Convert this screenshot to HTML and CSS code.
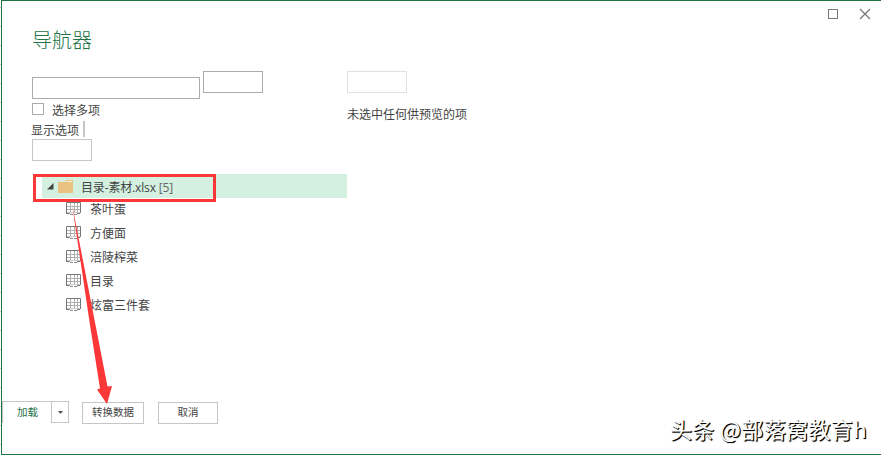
FILE: index.html
```html
<!DOCTYPE html>
<html lang="zh-CN">
<head>
  <meta charset="UTF-8" />
  <meta name="viewport" content="width=device-width, initial-scale=1.0" />
  <title>导航器</title>
  <link rel="stylesheet" href="styles.css">
</head>
<body>
  <svg class="defs" width="0" height="0">
    <symbol id="sheet" viewBox="0 0 15 13">
      <path d="M4.500 1v10M8.500 1v10M11.500 1v10M1 4.500h13M1 7.500h13" stroke="#b0b0b0" fill="none" />
      <path d="M1 10.500h13" stroke="#ccc" fill="none" />
      <path d="M.5 12V.5h14V11M0 11.500h4M11 11.500h3" stroke="#777" fill="none" />
      <path d="M4 12.500h3M8 12.500h3" stroke="#8a8a8a" fill="none" />
    </symbol>
  </svg>

  <div class="edge"></div>
  <div class="window">
    <header class="titlebar">
      <svg width="11" height="11"><rect x=".5" y=".5" width="9" height="9" fill="none" stroke="#777" /></svg>
      <svg width="12" height="12"><path d="M1 1l10 10M11 1L1 11" fill="none" stroke="#777" stroke-width="1.3" /></svg>
    </header>
    <h1>导航器</h1>

    <main class="content">
      <section class="left">
        <div class="search">
          <div class="box box-wide"></div>
          <div class="box"></div>
        </div>
        <label class="multi"><span class="check"></span>选择多项</label>
        <div class="options">显示选项<span class="bar"></span></div>
        <div class="box box-light"></div>

        <div class="tree">
          <div class="root">
            <svg class="toggle" width="7" height="7"><path d="M6.500 0v6.500H0z" fill="#444" /></svg>
            <svg class="folder" width="15" height="13"><path d="M0 2h7l1-2h7v13H0z" fill="#eac282" /><path d="M8.500 1.500h5.500" stroke="#fbf1de" /></svg>
            <span class="name">目录-素材.xlsx <span class="count">[5]</span></span>
            <div class="mark"></div>
          </div>
          <ul>
            <li><svg width="15" height="13"><use href="#sheet" /></svg>茶叶蛋</li>
            <li><svg width="15" height="13"><use href="#sheet" /></svg>方便面</li>
            <li><svg width="15" height="13"><use href="#sheet" /></svg>涪陵榨菜</li>
            <li><svg width="15" height="13"><use href="#sheet" /></svg>目录</li>
            <li><svg width="15" height="13"><use href="#sheet" /></svg>炫富三件套</li>
          </ul>
        </div>
      </section>

      <section class="preview">
        <div class="box box-faint"></div>
        <p>未选中任何供预览的项</p>
      </section>
    </main>

    <footer class="buttons">
      <div class="load">
        <span class="load-text">加载</span>
        <span class="drop"><svg width="5" height="3"><path d="M0 0h5L2.500 3z" fill="#555" /></svg></span>
      </div>
      <div class="btn btn-convert">转换数据</div>
      <div class="btn">取消</div>
    </footer>
  </div>

  <svg class="arrow" width="881" height="455">
    <path d="M72 204L95.500 325L107.500 386.500L112 386L107 404L97 389.500L100 388.500L90 325z" fill="#fb3737" />
  </svg>
  <div class="watermark">头条 @部落窝教育h</div>
</body>
</html>
```
FILE: styles.css
```css
* {
  box-sizing: border-box;
}
body {
  margin: 0;
  width: 881px;
  height: 455px;
  display: flex;
  position: relative;
  overflow: hidden;
  background: #fff;
  color: #444;
  font-family: "Noto Sans CJK SC", sans-serif;
  font-size: 12px;
  line-height: 16px;
}
svg {
  display: block;
  flex: none;
}
.defs {
  position: absolute;
}
.edge {
  width: 1px;
  background: repeating-linear-gradient(#fff 0 7px, #c8c8c8 7px 8px, #fff 8px 19px);
}
.window {
  flex: 1;
  display: flex;
  flex-direction: column;
  border: 1px solid #217346;
  border-right: none;
}
.titlebar {
  height: 24px;
  padding: 7px 10px 0 0;
  display: flex;
  justify-content: flex-end;
  gap: 20px;
}
.titlebar svg:first-child {
  margin-top: 1px;
}
h1 {
  margin: 0 0 0 30px;
  height: 46px;
  line-height: 29px;
  font-size: 20px;
  font-weight: 300;
  color: #217346;
}
.content {
  display: flex;
  height: 330px;
  padding-left: 30px;
}
.left {
  width: 315px;
}
.search {
  display: flex;
  gap: 3px;
  height: 32px;
}
.box {
  width: 60px;
  height: 22px;
  border: 1px solid #ababab;
}
.box-wide {
  width: 168px;
  margin-top: 6px;
}
.box-light {
  border-color: #c6c6c6;
}
.box-faint {
  border-color: #e1e1e1;
}
.multi {
  display: flex;
  height: 18px;
  line-height: 14px;
}
.check {
  width: 12px;
  height: 12px;
  margin-right: 8px;
  border: 1px solid #ababab;
}
.options {
  display: flex;
  height: 18px;
  margin-left: -1px;
  line-height: 18px;
}
.bar {
  width: 2px;
  height: 16px;
  margin-left: 4px;
  background: #c6c6c6;
}
.tree {
  padding: 13px 0 0 10px;
}
.root {
  position: relative;
  display: flex;
  align-items: center;
  height: 24px;
  padding-left: 5px;
  background: #d3f0e0;
}
.folder {
  margin: 0 8px 0 4px;
}
.name {
  padding-top: 3px;
  font-family: "Open Sans", "Noto Sans CJK SC", sans-serif;
  letter-spacing: -0.15px;
}
.count {
  color: #666;
}
/* red frame around the workbook row */
.mark {
  position: absolute;
  left: -9px;
  top: 0;
  width: 183px;
  height: 28px;
  border: 3px solid #fb3737;
}
ul {
  list-style: none;
  margin: -1px 0 0;
  padding: 0 0 0 24px;
}
li {
  display: flex;
  align-items: center;
  gap: 9px;
  height: 24px;
}
li svg {
  margin-bottom: 2px;
}
.preview p {
  margin: 13px 0 0;
}
.buttons {
  display: flex;
  font-size: 10.5px;
}
.load {
  width: 67px;
  height: 22px;
  display: flex;
  border-top: 1px solid #c6c6c6;
  border-left: 1px solid #c6c6c6;
  color: #217346;
}
.load-text {
  width: 48px;
  padding-left: 14px;
  line-height: 20px;
}
.drop {
  width: 18px;
  display: flex;
  align-items: center;
  justify-content: center;
  border: 1px solid #c6c6c6;
  border-top: none;
}
.btn {
  width: 60px;
  height: 22px;
  margin: 1px 0 0 14px;
  border: 1px solid #c6c6c6;
  line-height: 18px;
  text-align: center;
}
.btn-convert {
  width: 62px;
  margin-left: 13px;
}
.arrow {
  position: absolute;
  left: 0;
  top: 0;
}
.watermark {
  position: absolute;
  right: 14px;
  top: 412px;
  font-size: 22px;
  line-height: 32px;
  letter-spacing: 0.4px;
  color: #fff;
  text-shadow: 1px 1px 1px #000, 1px 1px 0 #222;
  white-space: nowrap;
}
```
